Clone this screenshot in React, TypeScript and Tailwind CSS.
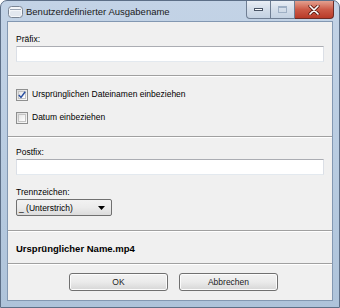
import React from 'react';

const font = { fontFamily: '"Liberation Sans", Arial, sans-serif' };

function Separator() {
  return (
    <div className="flex flex-col">
      <div className="h-px bg-[#a0a0a0]" />
      <div className="h-px bg-white" />
    </div>
  );
}

function TextInput() {
  return (
    <div className="mx-[8px] h-[16px] bg-white border border-[#abadb3] border-l-[#dbdfe6] border-r-[#dbdfe6] border-b-[#e3e9ef]" />
  );
}

function Checkbox({ checked }: { checked?: boolean }) {
  return (
    <div className="w-[12px] h-[12px] border border-[#8e8f8f] bg-gradient-to-br from-[#dcdcdc] to-[#fbfbfb] flex items-center justify-center">
      <div className="w-[8px] h-[8px] border border-[#c4c4c4] bg-gradient-to-br from-[#e6e6e6] to-[#ffffff] flex items-center justify-center">
        {checked && (
          <svg width="8" height="8" viewBox="0 0 8 8" className="overflow-visible">
            <path d="M0.8 4 L3 6.4 L7.2 0.8" fill="none" stroke="#2a4fa0" strokeWidth="1.5" />
          </svg>
        )}
      </div>
    </div>
  );
}

function WinButton({ label }: { label: string }) {
  return (
    <div className="w-[99px] h-[18px] rounded-[3px] border border-[#707070] bg-gradient-to-b from-[#f2f2f2] via-[#ebebeb] to-[#d6d6d6] flex items-center justify-center text-[8.5px] text-[#1b1b1b] shadow-[inset_0_0_0_1px_#fcfcfc]">
      {label}
    </div>
  );
}

export default function App() {
  return (
    <div
      className="w-[340px] h-[308px] rounded-t-[7px] bg-gradient-to-b from-[#c3d3e6] via-[#b9cce1] to-[#aec3da] border border-[#5d6f87] flex flex-col text-[#000]"
      style={font}
    >
      {/* title bar */}
      <div className="h-[20px] flex items-start relative">
        <div className="mt-[4px] ml-[7px] w-[15px] h-[13px]">
          <svg width="15" height="13" viewBox="0 0 15 13">
            <rect x="0.5" y="1.5" width="14" height="11" rx="3" fill="#f4f6f9" stroke="#7a8594" />
            <path d="M2 4.5 H13" stroke="#9aa5b4" />
            <rect x="2" y="6" width="11" height="5" rx="1.5" fill="#e3e8ef" />
          </svg>
        </div>
        <div className="ml-[3px] mt-[4px] text-[9.5px] leading-[13px] text-[#1a1a1a]">Benutzerdefinierter Ausgabename</div>
        <div className="ml-auto mr-[5px] flex">
          <div className="w-[25px] h-[18px] rounded-bl-[4px] border border-[#6f7e93] border-t-0 bg-gradient-to-b from-[#e9eef5] via-[#d3dde9] to-[#c3d1e2] flex items-center justify-center">
            <div className="w-[9px] h-[3px] bg-white border border-[#4a5566]" />
          </div>
          <div className="w-[24px] h-[18px] border-b border-r border-[#6f7e93] bg-gradient-to-b from-[#e9eef5] via-[#d3dde9] to-[#c3d1e2] flex items-center justify-center">
            <div className="w-[9px] h-[7px] border border-[#9fb0c5] bg-transparent shadow-[inset_0_1px_0_0_#9fb0c5]" />
          </div>
          <div className="w-[39px] h-[18px] rounded-br-[4px] border border-[#6d2b25] border-t-0 border-l-0 bg-gradient-to-b from-[#e3a08f] via-[#cc5a47] to-[#b83a28] flex items-center justify-center">
            <svg width="12" height="10" viewBox="0 0 12 10">
              <path d="M2 1 L10 9 M10 1 L2 9" stroke="#5a1a12" strokeWidth="3.2" strokeLinecap="round" />
              <path d="M2 1 L10 9 M10 1 L2 9" stroke="#ffffff" strokeWidth="1.7" strokeLinecap="round" />
            </svg>
          </div>
        </div>
      </div>

      {/* client area */}
      <div className="mx-[6px] mb-[6px] flex-1 border border-[#8398b2] bg-[#f0f0f0] flex flex-col text-[8.5px]">
        <div className="mt-[11px] mx-[8px] h-[13px] leading-[13px]">Präfix:</div>
        <TextInput />
        <div className="mt-[13px]">
          <Separator />
        </div>
        <div className="mt-[11px] mx-[8px] h-[13px] flex items-center gap-[4px]">
          <Checkbox checked />
          <span className="leading-[13px]">Ursprünglichen Dateinamen einbeziehen</span>
        </div>
        <div className="mt-[10px] mx-[8px] h-[13px] flex items-center gap-[4px]">
          <Checkbox />
          <span className="leading-[13px]">Datum einbeziehen</span>
        </div>
        <div className="mt-[12px]">
          <Separator />
        </div>
        <div className="mt-[7px] mx-[8px] h-[14px] leading-[14px]">Postfix:</div>
        <TextInput />
        <div className="mt-[10px] mx-[8px] h-[14px] leading-[14px]">Trennzeichen:</div>
        <div className="mx-[8px] w-[96px] h-[17px] rounded-[2px] border border-[#707070] bg-gradient-to-b from-[#f2f2f2] via-[#ebebeb] to-[#dcdcdc] flex items-center pl-[2px] pr-[6px]">
          <span className="leading-[14px]">_ (Unterstrich)</span>
          <svg width="7" height="4" viewBox="0 0 7 4" className="ml-auto">
            <path d="M0 0 H7 L3.5 4 Z" fill="#000" />
          </svg>
        </div>
        <div className="mt-[14px]">
          <Separator />
        </div>
        <div className="mt-[10px] mx-[8px] h-[14px] leading-[14px] text-[9.5px] font-bold">Ursprünglicher Name.mp4</div>
        <div className="mt-[7px]">
          <Separator />
        </div>
        <div className="mt-[8px] flex justify-center gap-[11px] pl-[7px]">
          <WinButton label="OK" />
          <WinButton label="Abbrechen" />
        </div>
      </div>
    </div>
  );
}
